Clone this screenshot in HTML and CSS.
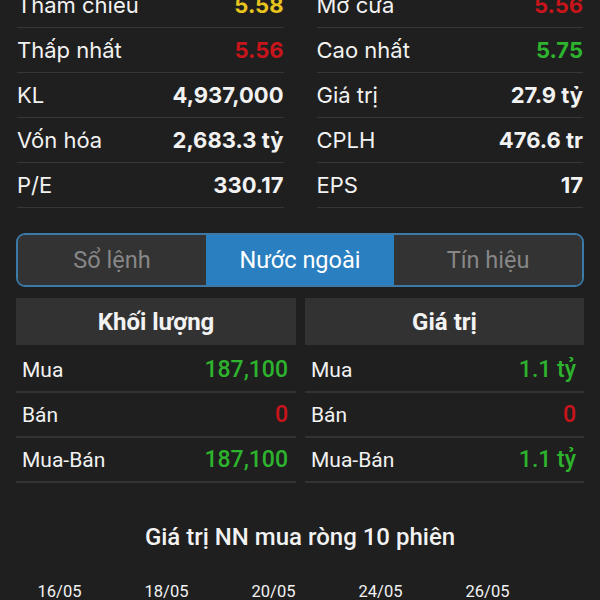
FILE: index.html
```html
<!DOCTYPE html>
<html lang="vi">
<head>
<meta charset="utf-8">
<title>Nước ngoài</title>
<link rel="stylesheet" href="styles.css">
</head>
<body>
<div class="page">
	<div class="stats">
		<div class="row"><span>Tham chiếu</span><b class="yellow">5.58</b></div>
		<div class="row"><span>Mở cửa</span><b class="red">5.56</b></div>
		<div class="row"><span>Thấp nhất</span><b class="red">5.56</b></div>
		<div class="row"><span>Cao nhất</span><b class="green">5.75</b></div>
		<div class="row"><span>KL</span><b>4,937,000</b></div>
		<div class="row"><span>Giá trị</span><b>27.9 tỷ</b></div>
		<div class="row"><span>Vốn hóa</span><b>2,683.3 tỷ</b></div>
		<div class="row"><span>CPLH</span><b>476.6 tr</b></div>
		<div class="row"><span>P/E</span><b>330.17</b></div>
		<div class="row"><span>EPS</span><b>17</b></div>
	</div>

	<div class="tabs">
		<button>Sổ lệnh</button>
		<button class="active">Nước ngoài</button>
		<button>Tín hiệu</button>
	</div>

	<div class="nn">
		<div class="col">
			<div class="head">Khối lượng</div>
			<div class="line"><span>Mua</span><span class="green">187,100</span></div>
			<div class="line"><span>Bán</span><span class="red">0</span></div>
			<div class="line"><span>Mua-Bán</span><span class="green">187,100</span></div>
		</div>
		<div class="col">
			<div class="head">Giá trị</div>
			<div class="line"><span>Mua</span><span class="green">1.1 tỷ</span></div>
			<div class="line"><span>Bán</span><span class="red">0</span></div>
			<div class="line"><span>Mua-Bán</span><span class="green">1.1 tỷ</span></div>
		</div>
	</div>

	<div class="title">Giá trị NN mua ròng 10 phiên</div>
</div>
<div class="axis">
	<span>16/05</span><span>18/05</span><span>20/05</span><span>24/05</span><span>26/05</span>
</div>
</body>
</html>
```

FILE: styles.css
```css
html {margin:0;}
body {margin:0; background:#1f1f1f; color:#f2f2f2; font-family:Inter, "Noto Sans", sans-serif; overflow:hidden;}
.page {padding:0 16px;}

.stats {display:grid; grid-template-columns:1fr 1fr; column-gap:33px; margin:-17px 1px 0 1px;}
.row {display:flex; justify-content:space-between; align-items:center; height:45px; box-sizing:border-box; border-bottom:1px solid #363636; font-size:22px;}
.row b {font-weight:700;}

.yellow {color:#e8c41e;}
.red {color:#c8141b;}
.green {color:#2db32d;}

.tabs {display:flex; margin-top:25px; height:54px; box-sizing:border-box; border:2px solid #3b7aa8; border-radius:9px; overflow:hidden; background:#333;}
.tabs button {flex:1; border:none; background:#333; color:#878787; font-family:Roboto, sans-serif; font-size:23.5px; padding:0; cursor:pointer;}
.tabs button.active {background:#2a7fc1; color:#fff;}

.nn {display:grid; grid-template-columns:280px 279px; column-gap:9px; margin-top:11px; font-family:Roboto, sans-serif;}
.head {background:#323232; height:47px; display:flex; align-items:center; justify-content:center; font-weight:700; font-size:24px; margin-bottom:3px;}
.line {display:flex; justify-content:space-between; align-items:center; height:45px; box-sizing:border-box; border-bottom:2px solid #333; padding:0 8px 0 6px; font-size:21px;}
.line span:last-child {font-weight:500; font-size:23px;}

.title {text-align:center; font-family:Roboto, sans-serif; font-weight:500; font-size:24px; line-height:30px; margin-top:39px;}

.axis {display:flex; padding-left:6px; margin-top:30px; font-family:Roboto, sans-serif; font-size:16.5px; line-height:20px;}
.axis span {width:107px; text-align:center;}
```
